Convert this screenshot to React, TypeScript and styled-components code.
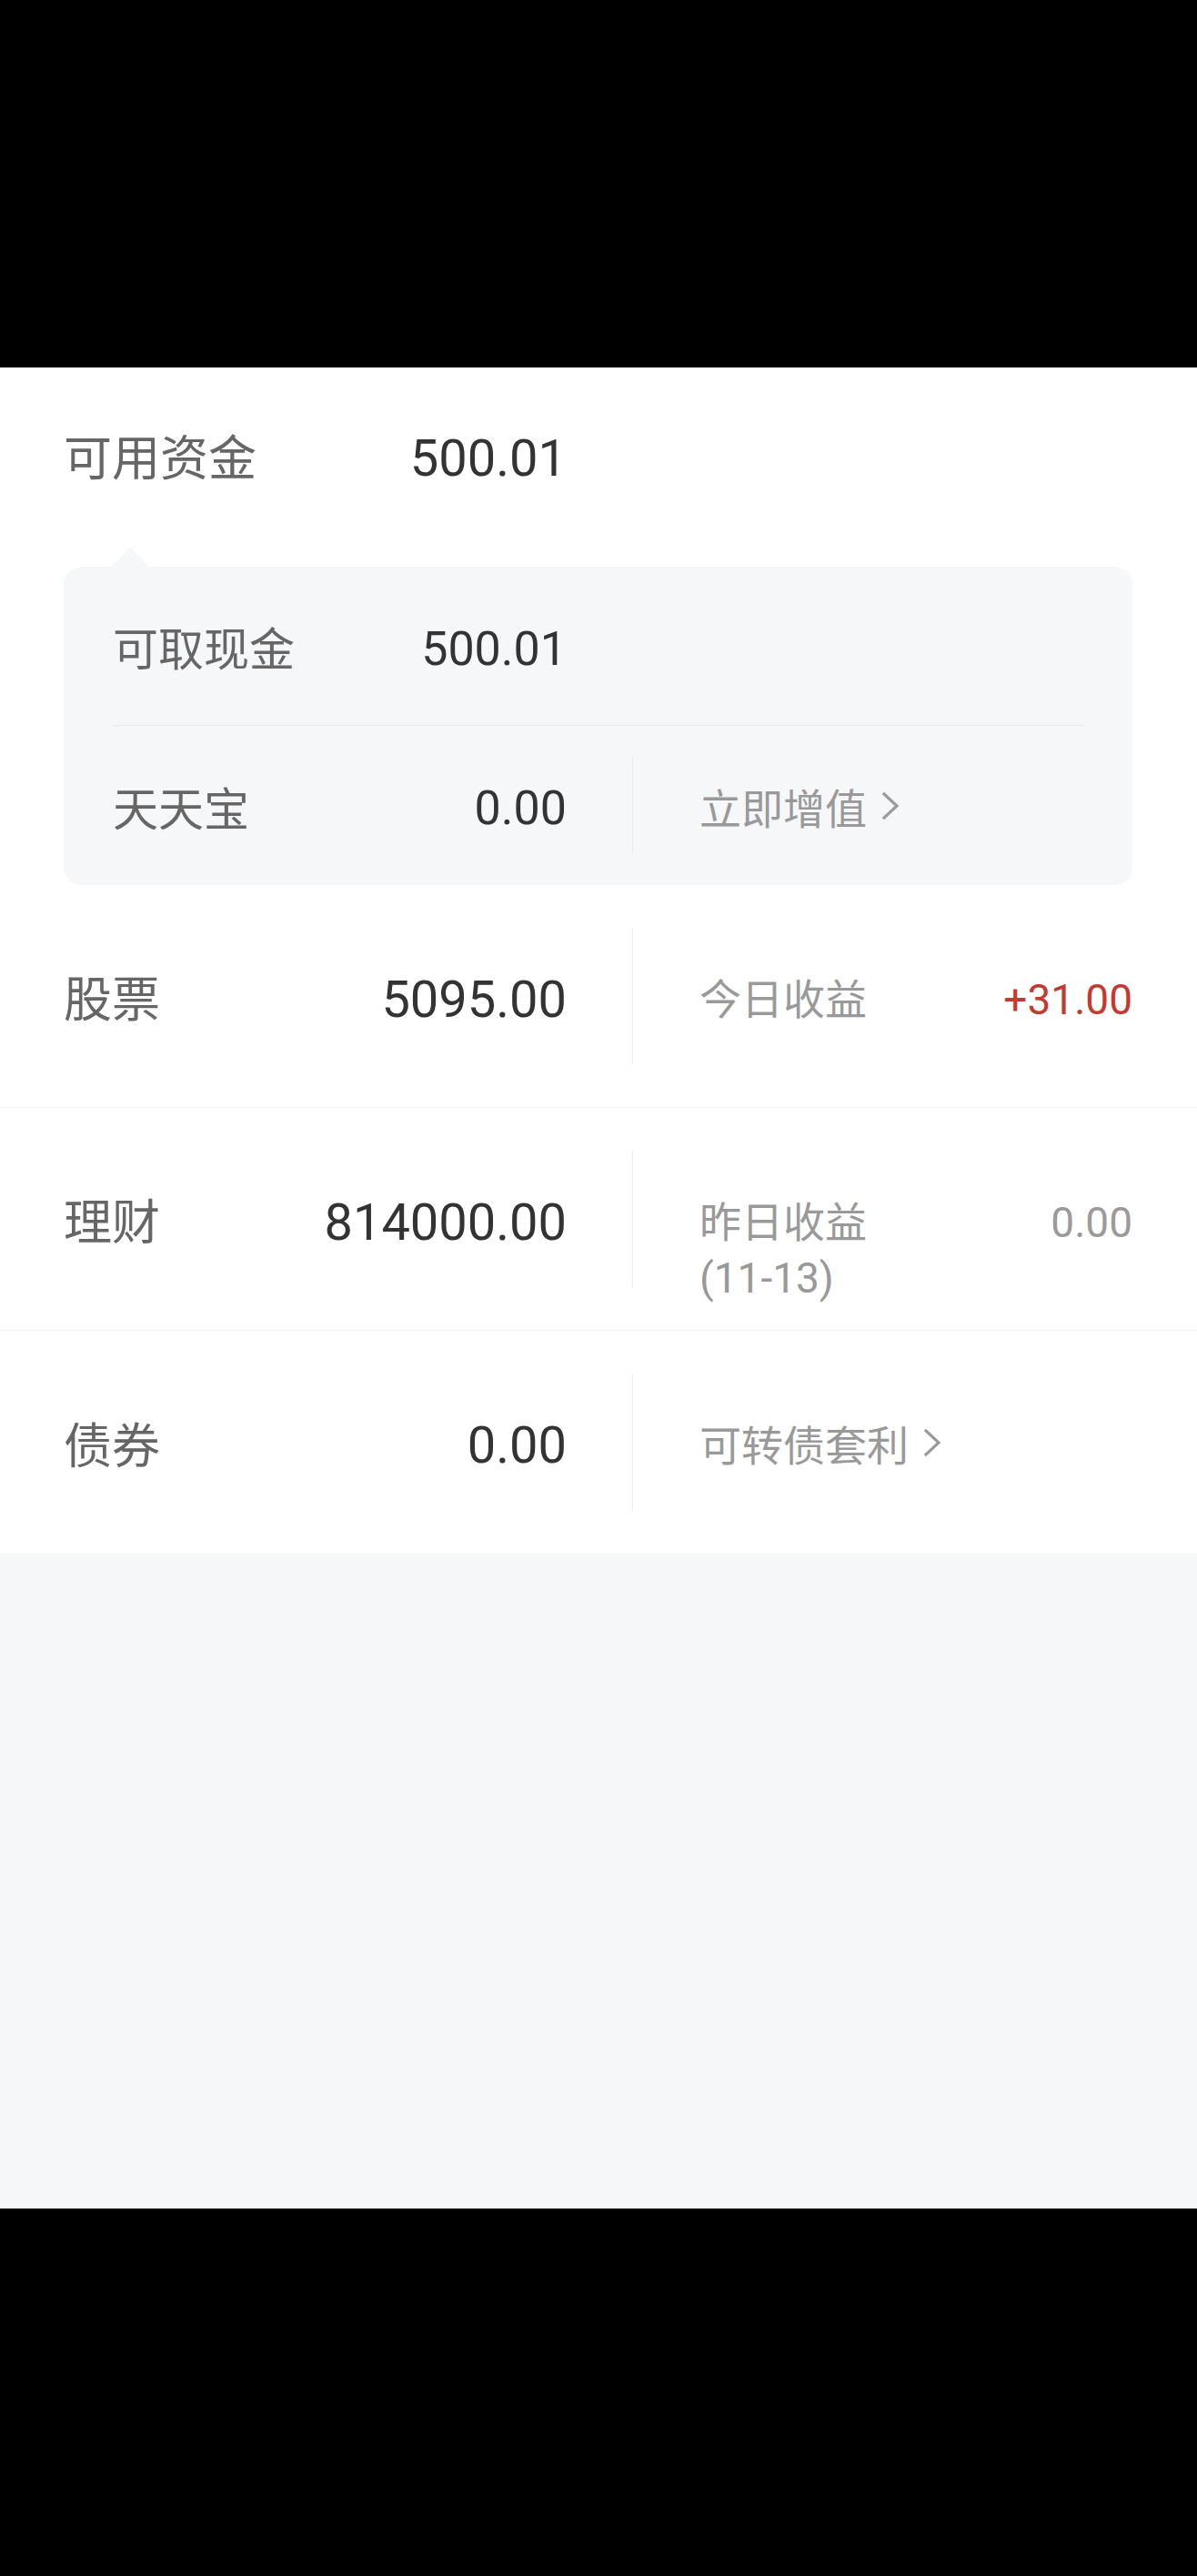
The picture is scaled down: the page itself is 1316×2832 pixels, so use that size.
import React from "react";
import styled, { createGlobalStyle } from "styled-components";

const GlobalStyle = createGlobalStyle`
  html, body {
    margin: 0;
    padding: 0;
    background: #000;
  }
  body {
    font-family: "Roboto", "Noto Sans CJK SC", sans-serif;
    -webkit-font-smoothing: antialiased;
  }
  * { box-sizing: border-box; }
`;

const Screen = styled.div`
  width: 1316px;
  display: flex;
  flex-direction: column;
  background: #000;
`;

const TopBar = styled.div`
  height: 404px;
  background: #000;
`;

const BottomBar = styled.div`
  height: 404px;
  background: #000;
`;

const Sheet = styled.div`
  background: #fff;
  display: flex;
  flex-direction: column;
`;

const Filler = styled.div`
  height: 720px;
  background: #f6f7f9;
`;

const HeadRow = styled.div`
  height: 192px;
  padding: 0 70px;
  display: flex;
  align-items: center;
`;

const LeftBlock = styled.div<{ $w: number }>`
  width: ${(p) => p.$w}px;
  flex: none;
  display: flex;
  align-items: center;
  justify-content: space-between;
`;

const Label = styled.span<{ $size: number }>`
  font-family: "Noto Sans CJK SC", sans-serif;
  font-size: ${(p) => p.$size}px;
  line-height: 66px;
  color: #666;
  white-space: nowrap;
`;

const Value = styled.span<{ $size: number }>`
  font-family: "Roboto", sans-serif;
  font-size: ${(p) => p.$size}px;
  line-height: 66px;
  padding-top: 7px;
  color: #333;
  white-space: nowrap;
`;

const Panel = styled.div`
  position: relative;
  margin: 27px 71px 0 70px;
  padding: 0 54px;
  background: #f6f7f9;
  border-radius: 20px;
  display: flex;
  flex-direction: column;

  &::before {
    content: "";
    position: absolute;
    top: -21px;
    left: 52px;
    width: 0;
    height: 0;
    border-left: 21px solid transparent;
    border-right: 21px solid transparent;
    border-bottom: 21px solid #f6f7f9;
  }
`;

const PanelRow = styled.div<{ $h: number; $line?: boolean }>`
  height: ${(p) => p.$h}px;
  display: flex;
  align-items: center;
  border-bottom: ${(p) => (p.$line ? "1px solid #e8e9eb" : "none")};
`;

const VDivider = styled.div<{ $h: number }>`
  flex: none;
  width: 1px;
  height: ${(p) => p.$h}px;
  margin: 0 73px 0 72px;
  background: #ebebeb;
`;

const Row = styled.div<{ $line?: boolean }>`
  height: 245px;
  padding: 0 71px 0 70px;
  display: flex;
  align-items: center;
  border-bottom: ${(p) => (p.$line ? "1px solid #efefef" : "none")};
`;

const RightCell = styled.div`
  flex: 1;
  height: 66px;
  display: flex;
  align-items: flex-start;
  justify-content: space-between;
  overflow: visible;
`;

const SubLabel = styled.div`
  font-family: "Noto Sans CJK SC", sans-serif;
  font-size: 46px;
  line-height: 61px;
  padding-top: 3px;
  color: #999;
  white-space: nowrap;
`;

const DateText = styled.span`
  font-family: "Roboto", sans-serif;
`;

const LinkText = styled.div`
  display: flex;
  align-items: center;
  gap: 16px;
  font-family: "Noto Sans CJK SC", sans-serif;
  font-size: 46px;
  line-height: 66px;
  color: #999;
  white-space: nowrap;
`;

const SubValue = styled.div<{ $tone: "red" | "gray" }>`
  font-family: "Roboto", sans-serif;
  font-size: 46px;
  line-height: 66px;
  padding-top: 4px;
  color: ${(p) => (p.$tone === "red" ? "#c33a31" : "#9a9a9a")};
  white-space: nowrap;
`;

const Chevron = () => (
  <svg width="20" height="30" viewBox="0 0 20 30" fill="none">
    <polyline
      points="3,2 17,15 3,28"
      stroke="#9a9a9a"
      strokeWidth="3.2"
      strokeLinecap="square"
      strokeLinejoin="miter"
    />
  </svg>
);

export default function App() {
  return (
    <>
      <GlobalStyle />
      <Screen>
        <TopBar />
        <Sheet>
          <HeadRow>
            <LeftBlock $w={553}>
              <Label $size={53}>可用资金</Label>
              <Value $size={56}>500.01</Value>
            </LeftBlock>
          </HeadRow>

          <Panel>
            <PanelRow $h={175} $line>
              <LeftBlock $w={499}>
                <Label $size={50}>可取现金</Label>
                <Value $size={52}>500.01</Value>
              </LeftBlock>
            </PanelRow>
            <PanelRow $h={175}>
              <LeftBlock $w={499}>
                <Label $size={50}>天天宝</Label>
                <Value $size={52}>0.00</Value>
              </LeftBlock>
              <VDivider $h={105} />
              <RightCell>
                <LinkText>
                  立即增值
                  <Chevron />
                </LinkText>
              </RightCell>
            </PanelRow>
          </Panel>

          <Row $line>
            <LeftBlock $w={553}>
              <Label $size={53}>股票</Label>
              <Value $size={56}>5095.00</Value>
            </LeftBlock>
            <VDivider $h={150} />
            <RightCell>
              <SubLabel>今日收益</SubLabel>
              <SubValue $tone="red">+31.00</SubValue>
            </RightCell>
          </Row>

          <Row $line>
            <LeftBlock $w={553}>
              <Label $size={53}>理财</Label>
              <Value $size={56}>814000.00</Value>
            </LeftBlock>
            <VDivider $h={150} />
            <RightCell>
              <SubLabel>
                昨日收益
                <br />
                <DateText>(11-13)</DateText>
              </SubLabel>
              <SubValue $tone="gray">0.00</SubValue>
            </RightCell>
          </Row>

          <Row>
            <LeftBlock $w={553}>
              <Label $size={53}>债券</Label>
              <Value $size={56}>0.00</Value>
            </LeftBlock>
            <VDivider $h={150} />
            <RightCell>
              <LinkText>
                可转债套利
                <Chevron />
              </LinkText>
            </RightCell>
          </Row>
        </Sheet>
        <Filler />
        <BottomBar />
      </Screen>
    </>
  );
}
